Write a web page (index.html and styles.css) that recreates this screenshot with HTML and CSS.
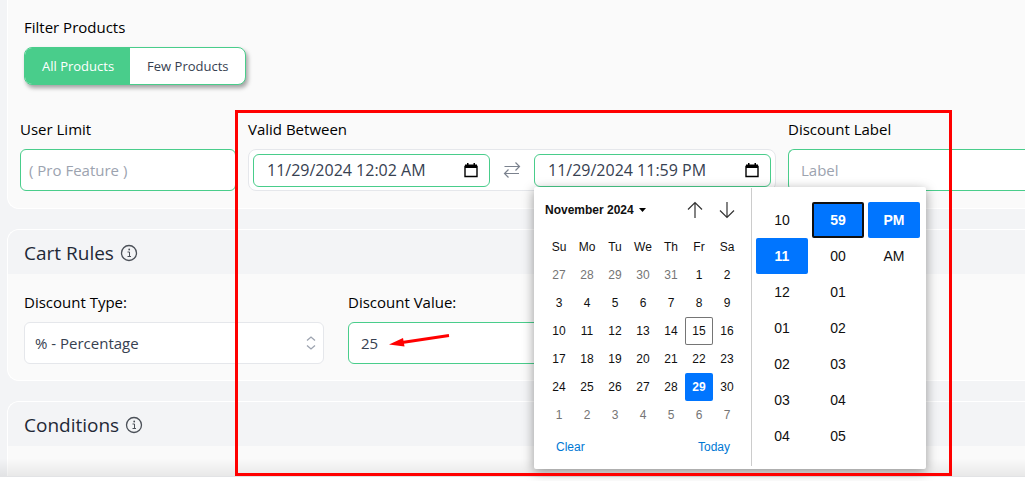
FILE: index.html
```html
<!DOCTYPE html>
<html lang="en">
<head>
<meta charset="utf-8">
<title>Discount Rules</title>
<link rel="stylesheet" href="styles.css">
</head>
<body>
<main class="page">
  <section class="card card-first">
    <div class="filter">
      <p class="label" id="filter-label">Filter Products</p>
      <div class="toggle" role="group" aria-labelledby="filter-label">
        <button type="button" class="toggle-btn active">All Products</button>
        <button type="button" class="toggle-btn">Few Products</button>
      </div>
    </div>
    <div class="limits">
      <div class="field">
        <label class="label" for="limit">User Limit</label>
        <input class="input" id="limit" type="text" placeholder="( Pro Feature )">
      </div>
      <div class="field">
        <label class="label" for="from">Valid Between</label>
        <div class="range">
          <div class="date">
            <input class="date-input" id="from" type="text" value="11/29/2024 12:02 AM">
            <button type="button" class="date-btn" aria-label="Open start calendar">
              <svg width="14" height="15" viewBox="0 0 14 15"><path d="M1 3.5h12v10H1z" fill="none" stroke="#000" stroke-width="1.4"/><path d="M1 1.500h12V5H1zM3 0h1.500v2H3zM9.500 0H11v2H9.500z"/></svg>
            </button>
          </div>
          <svg class="swap" width="18" height="18" viewBox="0 0 18 18" fill="none" stroke="#7b828e" stroke-width="1.2"><path d="M1.500 5.500h15M12.500 1.500l4 4-4 4M16 12.500H1.500M5.500 8.500l-4 4 4 4"/></svg>
          <div class="date">
            <input class="date-input" id="to" type="text" value="11/29/2024 11:59 PM" aria-label="Valid until">
            <button type="button" class="date-btn" aria-label="Open end calendar">
              <svg width="14" height="15" viewBox="0 0 14 15"><path d="M1 3.5h12v10H1z" fill="none" stroke="#000" stroke-width="1.4"/><path d="M1 1.500h12V5H1zM3 0h1.500v2H3zM9.500 0H11v2H9.500z"/></svg>
            </button>
            <div class="picker">
              <div class="calendar">
                <div class="cal-head">
                  <button type="button" class="month">November 2024 <svg width="7" height="4" viewBox="0 0 7 4"><path d="M0 0h7L3.500 4z"/></svg></button>
                  <button type="button" class="nav" aria-label="Previous month"><svg width="16" height="18" viewBox="0 0 16 18" fill="none" stroke="#333" stroke-width="1.2"><path d="M8 17V1.500M1 8.500l7-7 7 7"/></svg></button>
                  <button type="button" class="nav" aria-label="Next month"><svg width="16" height="18" viewBox="0 0 16 18" fill="none" stroke="#333" stroke-width="1.2"><path d="M8 1v15.500M1 9.500l7 7 7-7"/></svg></button>
                </div>
                <table class="days">
                  <thead><tr><th>Su</th><th>Mo</th><th>Tu</th><th>We</th><th>Th</th><th>Fr</th><th>Sa</th></tr></thead>
                  <tbody>
                    <tr><td class="out">27</td><td class="out">28</td><td class="out">29</td><td class="out">30</td><td class="out">31</td><td>1</td><td>2</td></tr>
                    <tr><td>3</td><td>4</td><td>5</td><td>6</td><td>7</td><td>8</td><td>9</td></tr>
                    <tr><td>10</td><td>11</td><td>12</td><td>13</td><td>14</td><td class="today">15</td><td>16</td></tr>
                    <tr><td>17</td><td>18</td><td>19</td><td>20</td><td>21</td><td>22</td><td>23</td></tr>
                    <tr><td>24</td><td>25</td><td>26</td><td>27</td><td>28</td><td class="selected">29</td><td>30</td></tr>
                    <tr><td class="out">1</td><td class="out">2</td><td class="out">3</td><td class="out">4</td><td class="out">5</td><td class="out">6</td><td class="out">7</td></tr>
                  </tbody>
                </table>
                <div class="cal-foot">
                  <button type="button" class="cal-link">Clear</button>
                  <button type="button" class="cal-link">Today</button>
                </div>
              </div>
              <div class="times">
                <div class="time-col">
                  <button type="button" class="time">10</button>
                  <button type="button" class="time chosen">11</button>
                  <button type="button" class="time">12</button>
                  <button type="button" class="time">01</button>
                  <button type="button" class="time">02</button>
                  <button type="button" class="time">03</button>
                  <button type="button" class="time">04</button>
                </div>
                <div class="time-col">
                  <button type="button" class="time chosen focused">59</button>
                  <button type="button" class="time">00</button>
                  <button type="button" class="time">01</button>
                  <button type="button" class="time">02</button>
                  <button type="button" class="time">03</button>
                  <button type="button" class="time">04</button>
                  <button type="button" class="time">05</button>
                </div>
                <div class="time-col">
                  <button type="button" class="time chosen">PM</button>
                  <button type="button" class="time">AM</button>
                </div>
              </div>
            </div>
          </div>
        </div>
      </div>
      <div class="field">
        <label class="label" for="dlabel">Discount Label</label>
        <input class="input input-open" id="dlabel" type="text" placeholder="Label">
      </div>
    </div>
  </section>

  <section class="card">
    <h2 class="card-head">Cart Rules
      <svg class="info" width="18" height="18" viewBox="0 0 18 18"><circle cx="9" cy="9" r="7.500" fill="none" stroke="#4b5058" stroke-width="1.3"/><path d="M7.500 8h2v4.500M7.500 12.500h3.500" fill="none" stroke="#4b5058"/><circle cx="9.200" cy="5.500" r=".9" fill="#4b5058"/></svg>
    </h2>
    <div class="rules">
      <div class="field rule">
        <label class="label" for="type">Discount Type:</label>
        <div class="select-wrap">
          <select class="select" id="type"><option>% - Percentage</option></select>
          <svg class="chevrons" width="10" height="14" viewBox="0 0 10 14" fill="none" stroke="#9ca3af" stroke-width="1.300"><path d="M1 4.500l4-3.500 4 3.500M1 9.500l4 3.500 4-3.500"/></svg>
        </div>
      </div>
      <div class="field rule">
        <label class="label" for="value">Discount Value:</label>
        <input class="input input-value" id="value" type="text" value="25">
      </div>
    </div>
  </section>

  <section class="card card-last">
    <h2 class="card-head">Conditions
      <svg class="info" width="18" height="18" viewBox="0 0 18 18"><circle cx="9" cy="9" r="7.500" fill="none" stroke="#4b5058" stroke-width="1.3"/><path d="M7.500 8h2v4.500M7.500 12.500h3.500" fill="none" stroke="#4b5058"/><circle cx="9.200" cy="5.500" r=".9" fill="#4b5058"/></svg>
    </h2>
  </section>
  <div class="fade"></div>
</main>
<div class="highlight"></div>
<svg class="arrow" width="62" height="18" viewBox="0 0 62 18"><path d="M13 10.500L60 3.500" stroke="red" stroke-width="2.800"/><path d="M0 12.500L14 6l1.500 8.500z" fill="red"/></svg>
</body>
</html>
```
FILE: styles.css
```css
* { box-sizing: border-box; }
body {
  margin: 0;
  min-height: 100vh;
  position: relative;
  overflow: hidden;
  background: #fff;
  color: #000;
  font: 15px/24px "Segoe UI", "Open Sans", "Noto Sans", sans-serif;
}
button, input, select { font: inherit; color: inherit; margin: 0; }
button { border: 0; padding: 0; background: none; }
.page {
  position: relative;
  display: flex;
  flex-direction: column;
  gap: 20px;
  height: calc(100vh - 4px);
  padding-left: 7px;
  background: #f3f4f6;
  border-bottom: 1px solid #e2e3e5;
}
.card {
  background: #fafafa;
  border: 1px solid #fff;
  border-right: 0;
  border-radius: 12px 0 0 12px;
}
.card-first { border-top: 0; border-top-left-radius: 0; padding: 15px 0 17px; }
.card-last { flex: 1; border-bottom: 0; border-bottom-left-radius: 0; }
.card-head {
  display: flex;
  align-items: center;
  gap: 6px;
  height: 44px;
  margin: 0;
  padding: 2px 16px 0;
  background: #f3f4f6;
  border-top-left-radius: 11px;
  color: #1f2937;
  font-size: 19px;
  font-weight: 400;
}
.filter { padding: 0 16px; }
.label { display: block; margin: 0 0 8px; }
.toggle {
  display: inline-flex;
  height: 38px;
  border: 1px solid #49cd8b;
  border-radius: 8px;
  overflow: hidden;
  background: #fff;
  box-shadow: 2px 3px 4px rgba(0, 0, 0, .35);
  vertical-align: top;
}
.toggle-btn { padding: 0 16px 0 17px; color: #374151; font-size: 13px; }
.toggle-btn.active { background: #49cd8b; color: #fff; }
.limits {
  display: grid;
  grid-template-columns: 216fr 528fr 237fr;
  gap: 12px;
  padding: 32px 0 0 12px;
}
.field { min-width: 0; }
.input, .select {
  display: block;
  width: 100%;
  height: 42px;
  padding: 0 8px;
  border: 1px solid #49cd8b;
  border-radius: 6px;
  background: #fff;
  color: #374151;
  outline: 0;
}
.input::placeholder { color: #9ca3af; }
.input-open { padding-left: 12px; border-right: 0; border-radius: 6px 0 0 6px; }
.input-value { padding-left: 12px; }
.range {
  display: flex;
  align-items: center;
  height: 42px;
  padding: 0 4px;
  border: 1px solid #e5e7eb;
  border-radius: 8px;
  background: #fff;
}
.swap { flex: none; margin: 0 13px; }
.date { position: relative; display: flex; flex: 1; min-width: 0; }
.date-input {
  width: 100%;
  height: 33px;
  padding: 0 32px 0 13px;
  border: 1px solid #49cd8b;
  border-radius: 6px;
  background: #fff;
  color: #374151;
  font-size: 16px;
  outline: 0;
}
.date-btn { position: absolute; right: 12px; top: 9px; height: 16px; line-height: 0; }
.picker {
  position: absolute;
  z-index: 2;
  top: 100%;
  left: 0;
  display: flex;
  background: #fff;
  border-radius: 2px;
  box-shadow: 0 3px 12px rgba(0, 0, 0, .4);
  color: #101010;
  font: 12px/28px "Liberation Sans", Arial, sans-serif;
}
.calendar { padding: 0 10px 8px 11px; }
.cal-head { display: flex; align-items: center; gap: 16px; height: 46px; padding-right: 6px; }
.month { display: flex; align-items: center; gap: 5px; margin-right: auto; font-weight: 700; }
.nav { line-height: 0; }
.days { border-collapse: collapse; table-layout: fixed; width: 196px; }
.days th, .days td { width: 28px; height: 28px; padding: 0; text-align: center; font-weight: 400; }
.days .out { color: #757575; }
.days .today { box-shadow: inset 0 0 0 1px #757575; border-radius: 2px; }
.days .selected { background: #0075ff; color: #fff; font-weight: 700; border-radius: 2px; }
.cal-foot { display: flex; justify-content: space-between; padding: 4px 11px 0; }
.cal-link { color: #0078d4; }
.times {
  display: flex;
  gap: 4px;
  margin: 1px 0 3px;
  padding: 14px 6px 0 4px;
  border-left: 1px solid #ccc;
}
.time-col { display: flex; flex-direction: column; }
.time { width: 52px; height: 36px; border-radius: 2px; font-size: 14px; }
.chosen { background: #0075ff; color: #fff; font-weight: 700; }
.focused { border: 2px solid #101010; }
.rules { display: flex; gap: 24px; padding: 16px 16px 16px; }
.rule { flex: 0 1 300px; }
.select-wrap { position: relative; }
.select { appearance: none; padding: 0 10px; border-color: #e5e7eb; }
.chevrons { position: absolute; right: 8px; top: 14px; pointer-events: none; }
.fade {
  position: absolute;
  left: 0;
  right: 0;
  bottom: 0;
  height: 18px;
  background: linear-gradient(rgba(0, 0, 0, 0), rgba(0, 0, 0, .07));
}
.highlight {
  position: absolute;
  z-index: 3;
  left: 235px;
  top: 110px;
  width: 717px;
  height: 366px;
  border: 3px solid #f00;
  pointer-events: none;
}
.arrow { position: absolute; z-index: 3; left: 389px; top: 332px; pointer-events: none; }
```
